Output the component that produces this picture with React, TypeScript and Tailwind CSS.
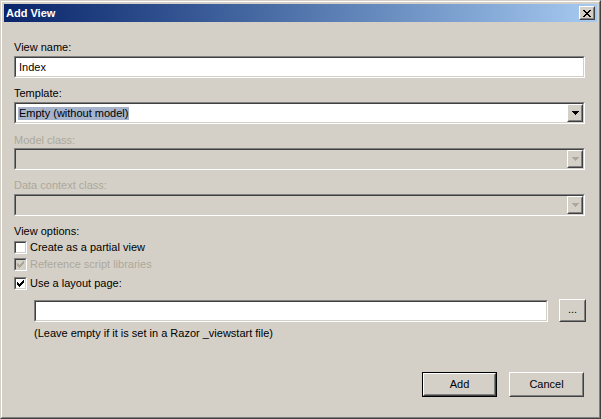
import React from "react";

// pixel glyphs drawn as little rect grids
const checkRows = ["......X", ".....XX", "X...XXX", "XX.XXX.", "XXXXX..", ".XXX...", "..X...."];
const closeRows = ["XX....XX", ".XX..XX.", "..XXXX..", "...XX...", "..XXXX..", ".XX..XX.", "XX....XX"];
const arrowRows = ["XXXXXXX", ".XXXXX.", "..XXX..", "...X..."];

function Pixels({ rows, color }: { rows: string[]; color: string }) {
  const w = rows[0].length;
  const h = rows.length;
  return (
    <svg width={w} height={h} viewBox={`0 0 ${w} ${h}`} shapeRendering="crispEdges" className="block">
      {rows.map((r, y) =>
        r.split("").map((c, x) => (c === "X" ? <rect key={`${x}-${y}`} x={x} y={y} width="1" height="1" fill={color} /> : null))
      )}
    </svg>
  );
}

function Sunken({ className = "", inner = "", children }: { className?: string; inner?: string; children?: React.ReactNode }) {
  return (
    <div className={`border border-t-[#808080] border-l-[#808080] border-b-white border-r-white ${className}`}>
      <div className={`h-full border border-t-[#404040] border-l-[#404040] border-b-[#d4d0c8] border-r-[#d4d0c8] ${inner}`}>
        {children}
      </div>
    </div>
  );
}

function Raised({ className = "", inner = "", children }: { className?: string; inner?: string; children?: React.ReactNode }) {
  return (
    <div className={`border border-t-white border-l-white border-b-[#404040] border-r-[#404040] bg-[#d4d0c8] ${className}`}>
      <div className={`h-full border border-t-[#d4d0c8] border-l-[#d4d0c8] border-b-[#808080] border-r-[#808080] flex items-center justify-center ${inner}`}>
        {children}
      </div>
    </div>
  );
}

function Label({ children, disabled }: { children: React.ReactNode; disabled?: boolean }) {
  return <div className={`h-[13px] leading-[13px] ${disabled ? "text-[#aca899]" : "text-black"}`}>{children}</div>;
}

function Select({ value, disabled, className = "" }: { value?: string; disabled?: boolean; className?: string }) {
  return (
    <Sunken className={`h-[22px] ${className}`} inner={`flex items-stretch ${disabled ? "bg-[#d4d0c8]" : "bg-white"}`}>
      <div className="flex-1 flex items-center pl-[2px]">
        {value && <span className="bg-[#a6b3cb] text-black leading-[13px] px-[1px]">{value}</span>}
      </div>
      <Raised className="w-[16px]">
        <Pixels rows={arrowRows} color={disabled ? "#aca899" : "#000000"} />
      </Raised>
    </Sunken>
  );
}

function Check({ label, checked, disabled }: { label: string; checked?: boolean; disabled?: boolean }) {
  return (
    <div className="flex items-center h-[13px]">
      <Sunken className="w-[13px] h-[13px]" inner={`flex items-center justify-center ${disabled ? "bg-[#d4d0c8]" : "bg-white"}`}>
        {checked && <Pixels rows={checkRows} color={disabled ? "#aca899" : "#000000"} />}
      </Sunken>
      <span className={`ml-[3px] leading-[13px] ${disabled ? "text-[#aca899]" : "text-black"}`}>{label}</span>
    </div>
  );
}

export default function App() {
  return (
    <div className="w-[601px] h-[419px] bg-[#d4d0c8] text-[11px] font-['Liberation_Sans',Arial,sans-serif] border border-t-[#d4d0c8] border-l-[#d4d0c8] border-b-[#404040] border-r-[#404040]">
      <div className="h-full flex flex-col p-[2px] border border-t-white border-l-white border-b-[#808080] border-r-[#808080]">
        {/* title bar */}
        <div className="h-[18px] flex items-center justify-between bg-gradient-to-r from-[#0a246a] to-[#a6caf0] pl-[2px] pr-[2px]">
          <span className="text-white font-bold leading-[13px]">Add View</span>
          <Raised className="w-[16px] h-[14px]">
            <Pixels rows={closeRows} color="#000000" />
          </Raised>
        </div>

        <div className="flex flex-col pl-[10px] pr-[12px] pt-[19px]">
          <Label>View name:</Label>
          <Sunken className="mt-[2px] h-[22px]" inner="bg-white flex items-center pl-[3px]">
            <span className="leading-[13px]">Index</span>
          </Sunken>

          <div className="mt-[9px]">
            <Label>Template:</Label>
          </div>
          <Select className="mt-[2px]" value="Empty (without model)" />

          <div className="mt-[10px]">
            <Label disabled>Model class:</Label>
          </div>
          <Select className="mt-[1px]" disabled />

          <div className="mt-[9px]">
            <Label disabled>Data context class:</Label>
          </div>
          <Select className="mt-[2px]" disabled />

          <div className="mt-[9px]">
            <Label>View options:</Label>
          </div>
          <div className="mt-[3px]">
            <Check label="Create as a partial view" />
          </div>
          <div className="mt-[4px]">
            <Check label="Reference script libraries" checked disabled />
          </div>
          <div className="mt-[6px]">
            <Check label="Use a layout page:" checked />
          </div>

          <div className="mt-[10px] pl-[20px] flex gap-[11px]">
            <Sunken className="flex-1 h-[22px]" inner="bg-white" />
            <Raised className="w-[27px] h-[23px] -mt-[1px] -mr-[1px]">
              <span className="leading-[13px] -mt-[3px]">...</span>
            </Raised>
          </div>
          <div className="mt-[5px] pl-[20px]">
            <Label>(Leave empty if it is set in a Razor _viewstart file)</Label>
          </div>

          <div className="mt-[32px] flex justify-end gap-[12px] pr-[1px]">
            <div className="border border-black">
              <Raised className="w-[73px] h-[23px]">
                <span className="leading-[13px]">Add</span>
              </Raised>
            </div>
            <Raised className="w-[75px] h-[25px]">
              <span className="leading-[13px]">Cancel</span>
            </Raised>
          </div>
        </div>
      </div>
    </div>
  );
}
